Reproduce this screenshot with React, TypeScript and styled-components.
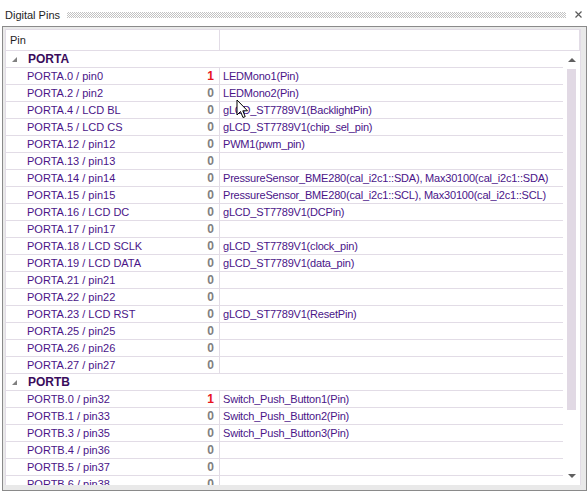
import React from "react";
import styled, { createGlobalStyle } from "styled-components";

const Global = createGlobalStyle`
  html, body { margin: 0; padding: 0; background: #ffffff; overflow: hidden; }
  body { font-family: "Liberation Sans", Arial, sans-serif; font-size: 11px; }
`;

const Page = styled.div`
  position: relative;
  width: 588px;
  height: 493px;
  background: #ffffff;
  display: flex;
  flex-direction: column;
`;

const TitleBar = styled.div`
  height: 26px;
  display: flex;
  align-items: center;
  padding: 0 6px 0 5px;
  box-sizing: border-box;
  gap: 7px;
`;

const Title = styled.span`
  font-size: 11px;
  color: #1e1e1e;
  padding-top: 3px;
`;

const Dots = styled.div`
  flex: 1;
  height: 6px;
  margin-top: 3px;
  background: repeating-conic-gradient(#c2c2c2 0 25%, transparent 0 50%) 0 0 / 2px 2px;
`;

const Close = styled.svg`
  width: 7px;
  height: 7px;
  margin-top: 3px;
  margin-left: 2px;
`;

const Frame = styled.div`
  margin-left: 2px;
  width: 585px;
  height: 465px;
  box-sizing: border-box;
  border: 1px solid #8a8a8a;
  background: #e9e9e9;
  padding: 2px 5px 5px 2px;
  display: flex;
`;

const ListView = styled.div`
  flex: 1;
  background: #ffffff;
  border: 1px solid #e2dce6;
  border-bottom: none;
  display: flex;
  flex-direction: column;
  overflow: hidden;
`;

const Header = styled.div`
  height: 20px;
  flex: none;
  display: flex;
  border-bottom: 1px solid #e2dce6;
`;

const HeaderCell = styled.div<{ $w?: number }>`
  ${(p) => (p.$w ? `width: ${p.$w}px; flex: none;` : "flex: 1;")}
  box-sizing: border-box;
  border-right: 1px solid #e2dce6;
  padding-left: 4px;
  display: flex;
  align-items: center;
  color: #1e1e1e;
  font-size: 11px;
`;

const Body = styled.div`
  flex: 1;
  display: flex;
  min-height: 0;
`;

const Rows = styled.div`
  flex: 1;
  overflow: hidden;
`;

const Row = styled.div`
  height: 16px;
  border-bottom: 1px solid #e2dce6;
  display: flex;
  align-items: stretch;
`;

const NameCell = styled.div`
  width: 214px;
  flex: none;
  box-sizing: border-box;
  border-right: 1px solid #e2dce6;
  padding: 0 5px 0 21px;
  display: flex;
  align-items: center;
  justify-content: space-between;
  white-space: nowrap;
`;

const PinName = styled.span`
  color: #4a1488;
`;

const Value = styled.span<{ $on: boolean }>`
  font-weight: bold;
  font-size: 12px;
  color: ${(p) => (p.$on ? "#e8141e" : "#808080")};
`;

const DescCell = styled.div`
  flex: 1;
  padding-left: 3px;
  display: flex;
  align-items: center;
  color: #4a1488;
  white-space: nowrap;
  overflow: hidden;
  letter-spacing: -0.2px;
`;

const GroupRow = styled.div`
  height: 16px;
  border-bottom: 1px solid #e2dce6;
  display: flex;
  align-items: center;
  padding-left: 6px;
`;

const Expander = styled.span`
  width: 0;
  height: 0;
  border-left: 5px solid transparent;
  border-bottom: 5px solid #808080;
  margin-right: 11px;
  margin-top: 1px;
`;

const GroupName = styled.span`
  font-weight: bold;
  font-size: 12px;
  color: #3a0c5c;
`;

const ScrollBar = styled.div`
  width: 17px;
  flex: none;
  display: flex;
  flex-direction: column;
  align-items: center;
`;

const ArrowBtn = styled.div`
  height: 17px;
  flex: none;
  width: 100%;
  display: flex;
  align-items: center;
  justify-content: center;
`;

const Thumb = styled.div`
  width: 9px;
  height: 341px;
  margin-top: 1px;
  background: #e1d9e4;
`;

const Track = styled.div`
  flex: 1;
`;

const Cursor = styled.svg`
  position: absolute;
  left: 236px;
  top: 99px;
  width: 13px;
  height: 20px;
`;

type Pin = { name: string; v: 0 | 1; desc?: string };
type Group = { port: string; pins: Pin[] };

const data: Group[] = [
  {
    port: "PORTA",
    pins: [
      { name: "PORTA.0 / pin0", v: 1, desc: "LEDMono1(Pin)" },
      { name: "PORTA.2 / pin2", v: 0, desc: "LEDMono2(Pin)" },
      { name: "PORTA.4 / LCD BL", v: 0, desc: "gLCD_ST7789V1(BacklightPin)" },
      { name: "PORTA.5 / LCD CS", v: 0, desc: "gLCD_ST7789V1(chip_sel_pin)" },
      { name: "PORTA.12 / pin12", v: 0, desc: "PWM1(pwm_pin)" },
      { name: "PORTA.13 / pin13", v: 0 },
      { name: "PORTA.14 / pin14", v: 0, desc: "PressureSensor_BME280(cal_i2c1::SDA), Max30100(cal_i2c1::SDA)" },
      { name: "PORTA.15 / pin15", v: 0, desc: "PressureSensor_BME280(cal_i2c1::SCL), Max30100(cal_i2c1::SCL)" },
      { name: "PORTA.16 / LCD DC", v: 0, desc: "gLCD_ST7789V1(DCPin)" },
      { name: "PORTA.17 / pin17", v: 0 },
      { name: "PORTA.18 / LCD SCLK", v: 0, desc: "gLCD_ST7789V1(clock_pin)" },
      { name: "PORTA.19 / LCD DATA", v: 0, desc: "gLCD_ST7789V1(data_pin)" },
      { name: "PORTA.21 / pin21", v: 0 },
      { name: "PORTA.22 / pin22", v: 0 },
      { name: "PORTA.23 / LCD RST", v: 0, desc: "gLCD_ST7789V1(ResetPin)" },
      { name: "PORTA.25 / pin25", v: 0 },
      { name: "PORTA.26 / pin26", v: 0 },
      { name: "PORTA.27 / pin27", v: 0 },
    ],
  },
  {
    port: "PORTB",
    pins: [
      { name: "PORTB.0 / pin32", v: 1, desc: "Switch_Push_Button1(Pin)" },
      { name: "PORTB.1 / pin33", v: 0, desc: "Switch_Push_Button2(Pin)" },
      { name: "PORTB.3 / pin35", v: 0, desc: "Switch_Push_Button3(Pin)" },
      { name: "PORTB.4 / pin36", v: 0 },
      { name: "PORTB.5 / pin37", v: 0 },
      { name: "PORTB.6 / pin38", v: 0 },
    ],
  },
];

export default function App() {
  return (
    <Page>
      <Global />
      <TitleBar>
        <Title>Digital Pins</Title>
        <Dots />
        <Close viewBox="0 0 7 7">
          <path d="M0.5 0.5 L6.5 6.5 M6.5 0.5 L0.5 6.5" stroke="#5a5a5a" strokeWidth="1.2" />
        </Close>
      </TitleBar>
      <Frame>
        <ListView>
          <Header>
            <HeaderCell $w={214}>Pin</HeaderCell>
            <HeaderCell />
          </Header>
          <Body>
            <Rows>
              {data.map((g) => (
                <React.Fragment key={g.port}>
                  <GroupRow>
                    <Expander />
                    <GroupName>{g.port}</GroupName>
                  </GroupRow>
                  {g.pins.map((p) => (
                    <Row key={p.name}>
                      <NameCell>
                        <PinName>{p.name}</PinName>
                        <Value $on={p.v === 1}>{p.v}</Value>
                      </NameCell>
                      <DescCell>{p.desc ?? ""}</DescCell>
                    </Row>
                  ))}
                </React.Fragment>
              ))}
            </Rows>
            <ScrollBar>
              <ArrowBtn>
                <svg width="8" height="5" viewBox="0 0 8 5">
                  <path d="M0 5 L4 1 L8 5 Z" fill="#606060" />
                </svg>
              </ArrowBtn>
              <Thumb />
              <Track />
              <ArrowBtn>
                <svg width="8" height="5" viewBox="0 0 8 5">
                  <path d="M0 0 L8 0 L4 4 Z" fill="#606060" />
                </svg>
              </ArrowBtn>
            </ScrollBar>
          </Body>
        </ListView>
      </Frame>
      <Cursor viewBox="0 0 13 20">
        <path
          d="M1 1 L1 16 L4.5 12.5 L7 18.5 L9.2 17.6 L6.8 11.8 L11.5 11.8 Z"
          fill="#ffffff"
          stroke="#000000"
          strokeWidth="1"
          strokeLinejoin="miter"
        />
      </Cursor>
    </Page>
  );
}
